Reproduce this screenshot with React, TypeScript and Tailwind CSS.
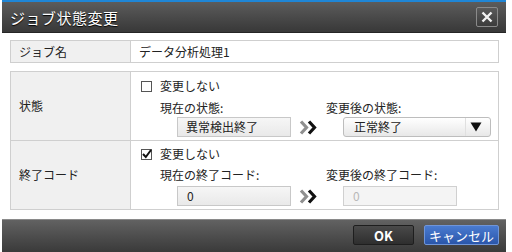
import React from 'react'

const font = { fontFamily: '"Noto Sans CJK JP", "Noto Sans", sans-serif' }

function Chevrons() {
  return (
    <svg width="20" height="15" viewBox="0 0 20 15" className="shrink-0">
      <path d="M2 1.5 L7.5 7.5 L2 13.5" fill="none" stroke="#8f8f8f" strokeWidth="3.2" />
      <path d="M10 1.5 L15.5 7.5 L10 13.5" fill="none" stroke="#111" strokeWidth="3.2" />
    </svg>
  )
}

function Checkbox({ checked }: { checked?: boolean }) {
  return (
    <span className="relative w-[11px] h-[11px] border border-[#555] bg-white shrink-0 inline-block">
      {checked && (
        <svg width="12" height="12" viewBox="0 0 12 12" className="absolute -left-[1px] -top-[2px]">
          <path d="M2 6 L4.8 9 L10 2" fill="none" stroke="#111" strokeWidth="2" />
        </svg>
      )}
    </span>
  )
}

export default function App() {
  return (
    <div className="w-[512px] h-[252px] bg-white overflow-hidden text-[12px] text-[#222]" style={font}>
      <div className="ml-[2px] w-[504px] h-full flex flex-col">
        {/* title bar */}
        <div className="h-[33px] shrink-0 border-t-2 border-[#1f86d6] bg-gradient-to-b from-[#5c5c5c] to-[#383838] border-b border-b-[#262626] flex items-center justify-between pl-[8px] pr-[8px]">
          <span className="text-white text-[15px] leading-none tracking-[0.5px] [text-shadow:0_1px_1px_#000]">ジョブ状態変更</span>
          <button className="w-[22px] h-[20px] rounded-[2px] border border-[#8a8a8a] bg-gradient-to-b from-[#5a5a5a] to-[#3c3c3c] flex items-center justify-center">
            <svg width="12" height="12" viewBox="0 0 12 12">
              <path d="M1.5 1.5 L10.5 10.5 M10.5 1.5 L1.5 10.5" stroke="#f2f2f2" strokeWidth="2.4" />
            </svg>
          </button>
        </div>

        {/* body */}
        <div className="flex-1 bg-white pl-[8px] pr-[7px] pt-[7px]">
          <div className="flex h-[23px] border border-[#cfcfcf]">
            <div className="w-[120px] bg-[#f0f0f0] border-r border-[#cfcfcf] flex items-center pl-[8px] leading-none">ジョブ名</div>
            <div className="flex-1 flex items-center pl-[8px] leading-none">データ分析処理1</div>
          </div>

          <div className="mt-[8px] border border-[#cfcfcf]">
            {/* 状態 */}
            <div className="flex h-[69px] border-b border-[#cfcfcf]">
              <div className="w-[120px] bg-[#f0f0f0] border-r border-[#cfcfcf] flex items-center pl-[8px] leading-none">状態</div>
              <div className="flex-1 pl-[10px] pt-[6px]">
                <div className="flex items-center h-[16px] gap-[8px] leading-none">
                  <Checkbox />
                  <span>変更しない</span>
                </div>
                <div className="flex h-[16px] mt-[6px] ml-[19px] items-center leading-none">
                  <span className="w-[166px]">現在の状態:</span>
                  <span>変更後の状態:</span>
                </div>
                <div className="flex items-center h-[20px] mt-[1px] ml-[36px]">
                  <div className="w-[114px] h-[20px] border border-[#c8c8c8] bg-gradient-to-b from-[#f6f6f6] to-[#e9e9e9] flex items-center pl-[8px] leading-none">異常検出終了</div>
                  <div className="w-[52px] flex items-center pl-[8px]"><Chevrons /></div>
                  <div className="w-[148px] h-[20px] rounded-[3px] border border-[#bdbdbd] bg-gradient-to-b from-[#ffffff] to-[#e8e8e8] flex items-center justify-between pl-[10px] pr-[8px] leading-none">
                    <span>正常終了</span>
                    <span className="flex items-center h-full border-l border-[#e0e0e0] pl-[4px]">
                      <svg width="12" height="10" viewBox="0 0 12 10">
                        <path d="M0.5 0.5 H11.5 L6 9.5 Z" fill="#111" />
                      </svg>
                    </span>
                  </div>
                </div>
              </div>
            </div>

            {/* 終了コード */}
            <div className="flex h-[68px]">
              <div className="w-[120px] bg-[#f0f0f0] border-r border-[#cfcfcf] flex items-center pl-[8px] leading-none">終了コード</div>
              <div className="flex-1 pl-[10px] pt-[5px]">
                <div className="flex items-center h-[16px] gap-[8px] leading-none">
                  <Checkbox checked />
                  <span>変更しない</span>
                </div>
                <div className="flex h-[16px] mt-[5px] ml-[19px] items-center leading-none">
                  <span className="w-[166px]">現在の終了コード:</span>
                  <span>変更後の終了コード:</span>
                </div>
                <div className="flex items-center h-[20px] mt-[3px] ml-[36px]">
                  <div className="w-[114px] h-[20px] border border-[#c8c8c8] bg-gradient-to-b from-[#f6f6f6] to-[#e9e9e9] flex items-center pl-[9px] leading-none">0</div>
                  <div className="w-[52px] flex items-center pl-[8px]"><Chevrons /></div>
                  <div className="w-[114px] h-[20px] border border-[#d0d0d0] bg-[#f4f4f4] flex items-center pl-[9px] leading-none text-[#b8b8b8]">0</div>
                </div>
              </div>
            </div>
          </div>
        </div>

        {/* footer */}
        <div className="h-[33px] shrink-0 border-t border-[#8a8a8a] bg-gradient-to-b from-[#626262] to-[#3a3a3a] flex items-start justify-end gap-[10px] pt-[5px] pr-[7px]">
          <button className="w-[61px] h-[20px] rounded-[2px] border border-[#1e1e1e] bg-gradient-to-b from-[#4a4a4a] to-[#2e2e2e] text-white text-[13px] font-bold leading-none flex items-center justify-center">OK</button>
          <button className="w-[75px] h-[20px] rounded-[2px] border border-[#6f95d8] bg-gradient-to-b from-[#4a7bd0] to-[#2a56aa] text-white text-[13px] leading-none flex items-center justify-center">キャンセル</button>
        </div>
      </div>
    </div>
  )
}
